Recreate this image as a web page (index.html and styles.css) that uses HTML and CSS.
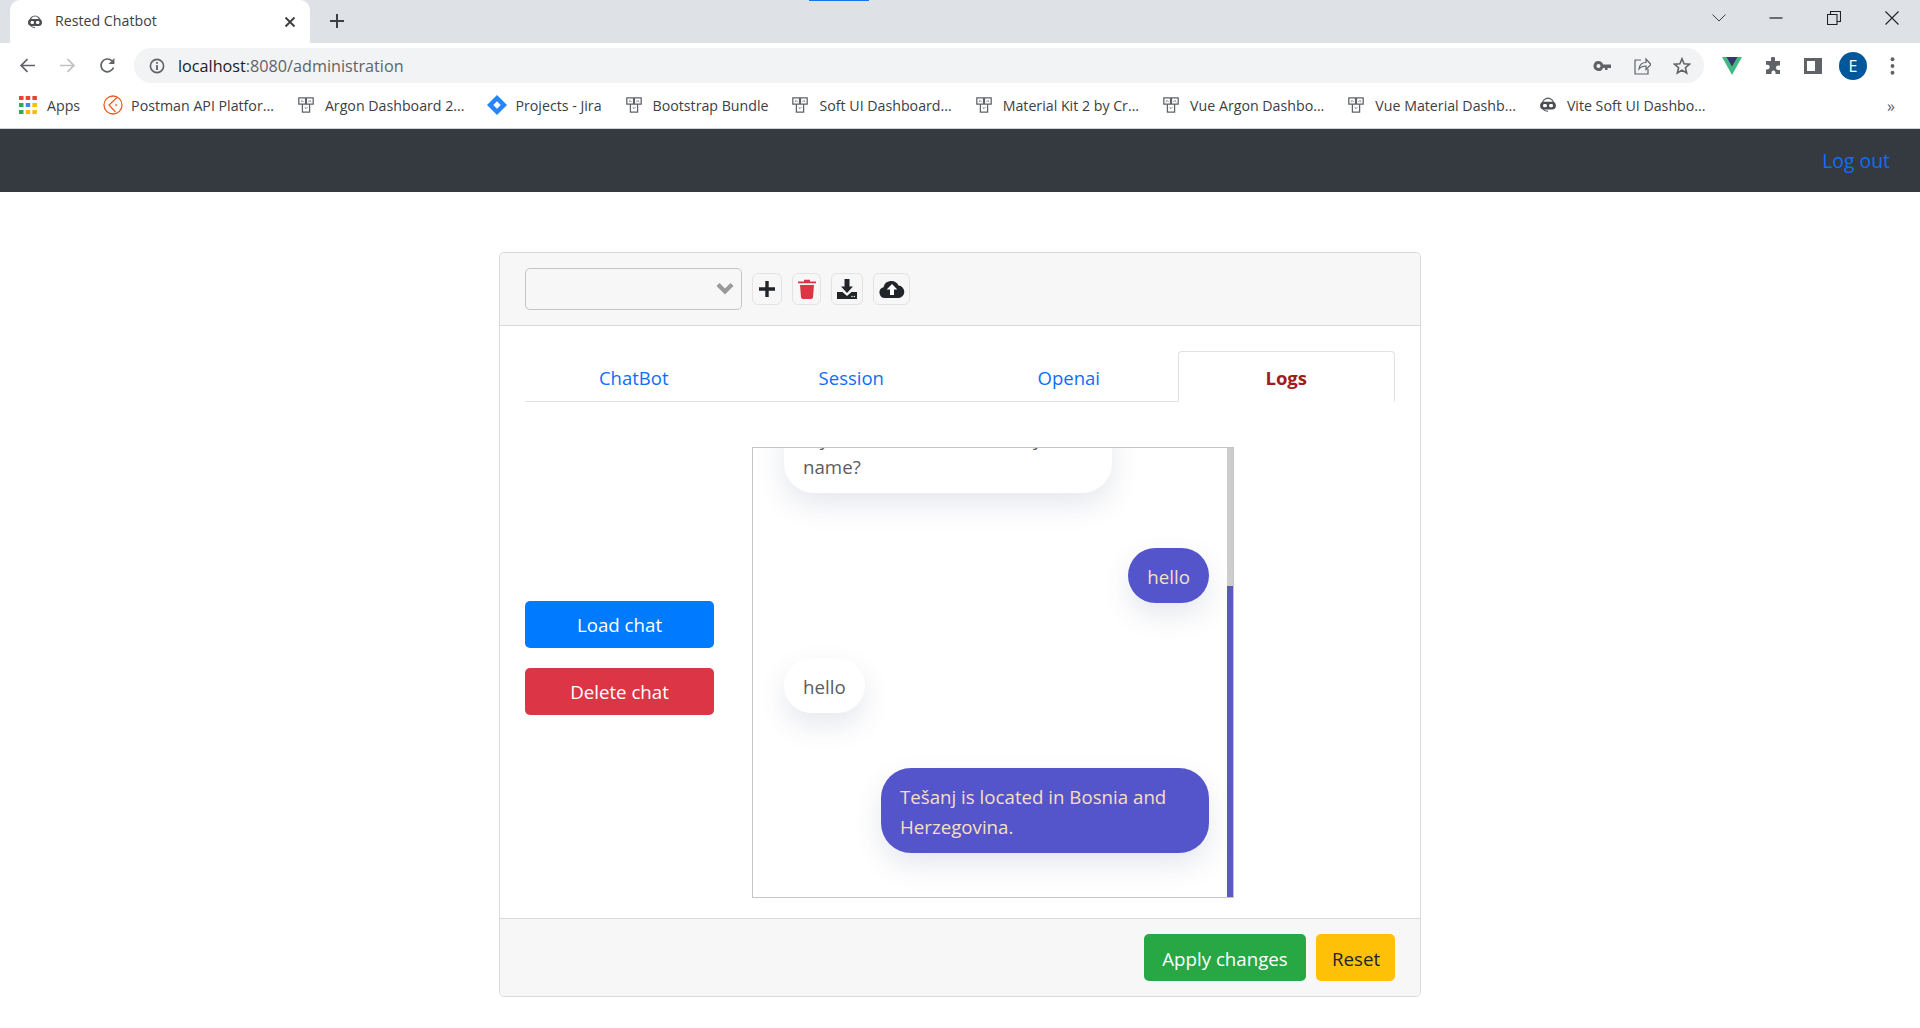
FILE: index.html
```html
<!DOCTYPE html>
<html lang="en">
<head>
  <meta charset="UTF-8">
  <title>Rested Chatbot</title>
  <link rel="stylesheet" href="styles.css">
</head>
<body>

  <svg class="defs" width="0" height="0">
    <symbol id="bot" viewBox="0 0 16 16">
      <path d="M3 7a5 5 0 0 1 10 0M3.500 11.500c1.200 1.500 2.800 2.200 4.500 2.200" fill="none" stroke="#5f6368" stroke-width="1.200"/>
      <rect x="1" y="5" width="14" height="7" rx="3.400" fill="#4a4d52"/>
      <rect x="3.600" y="7" width="3.400" height="3" rx="1.200" fill="#fff"/>
      <rect x="9" y="7" width="3.400" height="3" rx="1.200" fill="#fff"/>
    </symbol>
    <symbol id="vuestack" viewBox="-1 -1 20 20">
      <path d="M1 1h7.500v7H1zM9.500 1H17v7H9.500zM5 8h8v9H5z" fill="#fff" stroke="#5f6368" stroke-width="1.400"/>
      <path d="M3.200 5.500l1.500-1.500L6.200 5.500M11.800 5.500l1.500-1.500L14.800 5.500M7.500 11.500L9 13l1.500-1.500" fill="none" stroke="#5f6368" stroke-width="1"/>
    </symbol>
  </svg>

  <div class="browser">
    <div class="tabstrip">
      <div class="loadbar"></div>
      <div class="tab">
        <svg class="favicon"><use href="#bot"/></svg>
        <span class="tab-title">Rested Chatbot</span>
        <svg class="tab-close" viewBox="0 0 12 12"><path d="M1.500 1.500l9 9M10.500 1.500l-9 9" stroke="#3c4043" stroke-width="1.900"/></svg>
      </div>
      <svg class="tab-new" viewBox="0 0 16 16"><path d="M8 1v14M1 8h14" stroke="#3c4043" stroke-width="2"/></svg>
      <div class="spacer"></div>
      <svg class="win win-tabs" viewBox="0 0 14 8"><path d="M.5.500L7 7 13.500.500" fill="none" stroke="#3c4043"/></svg>
      <svg class="win win-min" viewBox="0 0 14 14"><path d="M.5 7h13" stroke="#202124" stroke-width="1.200"/></svg>
      <svg class="win win-max" viewBox="0 0 14 14"><path d="M.5 3.500h9.500v10H.5zM3.500 3.500V.5h10v10H10" fill="none" stroke="#202124" stroke-width="1.100"/></svg>
      <svg class="win win-close" viewBox="0 0 14 14"><path d="M.5.500l13 13M13.500.500l-13 13" stroke="#202124" stroke-width="1.100"/></svg>
    </div>

    <div class="toolbar">
      <svg class="nav-icon" viewBox="0 0 16 16"><path d="M15 8H2M8 2L2 8l6 6" fill="none" stroke="#5f6368" stroke-width="1.600"/></svg>
      <svg class="nav-icon nav-forward" viewBox="0 0 16 16"><path d="M1 8h13M8 2l6 6-6 6" fill="none" stroke="#bdc1c6" stroke-width="1.600"/></svg>
      <svg class="nav-icon nav-reload" viewBox="0 0 16 16"><path d="M13.600 9.800A6 6 0 1 1 12.300 3.800" fill="none" stroke="#5f6368" stroke-width="1.600"/><path d="M14.500 1v5.500H9z" fill="#5f6368"/></svg>
      <div class="omnibox">
        <svg class="info-icon" viewBox="0 0 16 16"><circle cx="8" cy="8" r="6.600" fill="none" stroke="#5f6368" stroke-width="1.600"/><path d="M7.100 7h1.800v5H7.100zM7.100 4h1.800v1.800H7.100z" fill="#5f6368"/></svg>
        <span class="url"><b>localhost</b>:8080/administration</span>
        <div class="spacer"></div>
        <svg class="omni-icon" viewBox="0 0 18 12"><path d="M5.500 1a5 5 0 1 0 4.600 7H12v2h2.500V8H18V4.500H10.100A5 5 0 0 0 5.500 1zm0 3a2 2 0 1 1 0 4 2 2 0 0 1 0-4z" fill="#5f6368" fill-rule="evenodd"/></svg>
        <svg class="omni-icon" viewBox="0 0 18 18"><path d="M8 3H2v14h13v-5M6 12c.500-4 3-6.500 7-6.500V2l5 5.500-5 5V9c-3 0-5 .5-7 3z" fill="none" stroke="#5f6368" stroke-width="1.200"/></svg>
        <svg class="omni-icon" viewBox="0 0 18 18"><path d="M9 1.800l2.100 5 5.400.4-4.100 3.500 1.300 5.300L9 13.100 4.300 16l1.300-5.300L1.500 7.200l5.400-.4z" fill="none" stroke="#5f6368" stroke-width="1.600"/></svg>
      </div>
      <svg class="ext-icon ext-vue" viewBox="0 0 20 18"><path d="M0 0h20L10 18z" fill="#42b883"/><path d="M4.500 0h11L10 9.500z" fill="#35356e"/></svg>
      <svg class="ext-icon" viewBox="0 0 18 18"><path d="M7 1.500a2 2 0 0 1 4 0V4h5v4.500h-1.800a2.200 2.200 0 0 0 0 4.400H16V17h-4.500v-1.500a2 2 0 0 0-4 0V17H2v-4.500h1.300a2.400 2.400 0 0 0 0-4.800H2V4h5z" fill="#5f6368"/></svg>
      <svg class="ext-icon" viewBox="0 0 18 18"><path d="M0 1h18v16H0zM3 4v10h8V4z" fill="#5f6368" fill-rule="evenodd"/></svg>
      <span class="avatar">E</span>
      <svg class="ext-icon ext-menu" viewBox="0 0 4 16"><circle cx="2" cy="2" r="1.700" fill="#5f6368"/><circle cx="2" cy="8" r="1.700" fill="#5f6368"/><circle cx="2" cy="14" r="1.700" fill="#5f6368"/></svg>
    </div>

    <div class="bookmarks">
      <span class="bookmark">
        <svg class="bm-icon" viewBox="0 0 18 18">
          <rect x="0" y="0" width="4.500" height="4" fill="#ea4335"/><rect x="6.700" y="0" width="4.500" height="4" fill="#ea4335"/><rect x="13.400" y="0" width="4.500" height="4" fill="#ea4335"/>
          <rect x="0" y="7" width="4.500" height="4" fill="#34a853"/><rect x="6.700" y="7" width="4.500" height="4" fill="#4285f4"/><rect x="13.400" y="7" width="4.500" height="4" fill="#fbbc04"/>
          <rect x="0" y="14" width="4.500" height="4" fill="#34a853"/><rect x="6.700" y="14" width="4.500" height="4" fill="#fbbc04"/><rect x="13.400" y="14" width="4.500" height="4" fill="#fbbc04"/>
        </svg>Apps</span>
      <span class="bookmark">
        <svg class="bm-icon bm-wide" viewBox="0 0 20 20"><circle cx="10" cy="10" r="9" fill="#fff" stroke="#ef5b25" stroke-width="1.300"/><path d="M14 2.500L6 10l6.500 7" fill="none" stroke="#ef5b25" stroke-width="1.300"/><path d="M12.500 8.500l2 1.500-2 1.500z" fill="#ef5b25"/></svg>Postman API Platfor...</span>
      <span class="bookmark"><svg class="bm-icon"><use href="#vuestack"/></svg>Argon Dashboard 2...</span>
      <span class="bookmark">
        <svg class="bm-icon bm-wide" viewBox="0 0 20 20"><path d="M10 0l10 10-10 10L0 10z" fill="#2684ff"/><path d="M10 6.300L13.700 10 10 13.700 6.300 10z" fill="#fff"/></svg>Projects - Jira</span>
      <span class="bookmark"><svg class="bm-icon"><use href="#vuestack"/></svg>Bootstrap Bundle</span>
      <span class="bookmark"><svg class="bm-icon"><use href="#vuestack"/></svg>Soft UI Dashboard...</span>
      <span class="bookmark"><svg class="bm-icon"><use href="#vuestack"/></svg>Material Kit 2 by Cr...</span>
      <span class="bookmark"><svg class="bm-icon"><use href="#vuestack"/></svg>Vue Argon Dashbo...</span>
      <span class="bookmark"><svg class="bm-icon"><use href="#vuestack"/></svg>Vue Material Dashb...</span>
      <span class="bookmark"><svg class="bm-icon"><use href="#bot"/></svg>Vite Soft UI Dashbo...</span>
      <div class="spacer"></div>
      <span class="bm-more">»</span>
    </div>
  </div>

  <nav class="navbar">
    <a class="logout">Log out</a>
  </nav>

  <main class="card">
    <div class="card-header">
      <div class="select-box">
        <svg class="select-arrow" viewBox="0 0 18 13"><path d="M2 2.500l7 7 7-7" fill="none" stroke="#999" stroke-width="4.200"/></svg>
      </div>
      <button class="icon-btn btn-add">
        <svg viewBox="0 0 18 18"><path d="M9 1v16M1 9h16" stroke="#212529" stroke-width="3.400"/></svg>
      </button>
      <button class="icon-btn btn-trash">
        <svg viewBox="0 0 18 20"><path d="M0 2.500h18v1.800H0zM6 .8h6v1.700H6zM2 6h14l-1 12.200q-.2 1.800-2 1.800H5q-1.800 0-2-1.800z" fill="#dc3545"/></svg>
      </button>
      <button class="icon-btn btn-down">
        <svg viewBox="0 0 20 20"><path d="M7.500 0h5v7.500h3.500L10 14 4 7.500h3.500zM0 13h5.500l4.500 4 4.500-4H20v7H0z" fill="#212529"/><circle cx="15" cy="17.500" r=".7" fill="#fff"/><circle cx="17.300" cy="17.500" r=".7" fill="#fff"/></svg>
      </button>
      <button class="icon-btn btn-up">
        <svg viewBox="0 0 26 18"><path d="M6 18a5.500 5.500 0 0 1-1.500-10.800A8 8 0 0 1 19.500 5.500 6.300 6.300 0 0 1 20 18z" fill="#212529"/><path d="M13 4l5.300 5.600H15V15h-4V9.600H7.700z" fill="#fff"/></svg>
      </button>
    </div>

    <div class="card-body">
      <div class="tabs">
        <a class="tab-link">ChatBot</a>
        <a class="tab-link">Session</a>
        <a class="tab-link">Openai</a>
        <a class="tab-link active">Logs</a>
      </div>

      <div class="logs">
        <div class="chat-actions">
          <button class="btn btn-blue">Load chat</button>
          <button class="btn btn-red">Delete chat</button>
        </div>

        <div class="chat-box">
          <div class="messages">
            <div class="bubble bot first">My dearest friend, what is your name?</div>
            <div class="bubble user">hello</div>
            <div class="bubble bot">hello</div>
            <div class="bubble user wide">Tešanj is located in Bosnia and Herzegovina.</div>
          </div>
          <div class="scrollbar"><div class="scroll-thumb"></div></div>
        </div>
      </div>
    </div>

    <div class="card-footer">
      <button class="btn btn-green">Apply changes</button>
      <button class="btn btn-yellow">Reset</button>
    </div>
  </main>

</body>
</html>
```

FILE: styles.css
```css
* {
  box-sizing: border-box;
}

body {
  margin: 0;
  height: 1028px;
  overflow: hidden;
  font-family: "Open Sans", "Noto Sans", Arial, sans-serif;
  background-color: #fff;
  color: #212529;
}

.defs {
  position: absolute;
}

.spacer {
  flex: 1;
}

/* browser chrome */

.browser {
  border-bottom: 1px solid #d0d2d5;
  font-family: "Open Sans", Arial, sans-serif;
}

.tabstrip {
  position: relative;
  display: flex;
  align-items: center;
  height: 43px;
  background-color: #dee1e6;
  padding-left: 10px;
}

.loadbar {
  position: absolute;
  left: 809px;
  top: 0;
  width: 60px;
  height: 1px;
  background-color: #1a73e8;
}

.tab {
  display: flex;
  align-items: center;
  align-self: flex-end;
  width: 300px;
  height: 43px;
  padding: 0 14px 0 17px;
  background-color: #fff;
  border-radius: 10px 10px 0 0;
}

.favicon {
  width: 16px;
  height: 16px;
  margin-right: 12px;
}

.tab-title {
  flex: 1;
  margin-bottom: 2px;
  font-size: 14.200px;
  color: #3c4043;
}

.tab-close {
  width: 12px;
  height: 12px;
}

.tab-new {
  width: 16px;
  height: 16px;
  margin: 0 0 2px 19px;
}

.win {
  width: 14px;
  height: 14px;
  margin: 0 44px 7px 0;
}

.win-tabs {
  height: 8px;
  margin-right: 43px;
}

.win-close {
  margin-right: 21px;
}

.toolbar {
  display: flex;
  align-items: center;
  height: 40px;
  padding: 5px 0 0 19px;
  background-color: #fff;
}

.nav-icon {
  width: 17px;
  height: 17px;
  margin-right: 23px;
}

.nav-reload {
  margin-right: 18px;
}

.omnibox {
  display: flex;
  align-items: center;
  width: 1570px;
  height: 35px;
  padding: 0 13px 0 15px;
  background-color: #f1f3f4;
  border-radius: 18px;
}

.info-icon {
  width: 16px;
  height: 16px;
  margin-right: 13px;
}

.url {
  font-size: 16.200px;
  color: #5f6368;
}

.url b {
  font-weight: 400;
  color: #202124;
}

.omni-icon {
  width: 18px;
  height: 18px;
  margin-left: 22px;
}

.ext-icon {
  width: 18px;
  height: 18px;
  margin-left: 22px;
}

.ext-vue {
  width: 20px;
  margin-left: 18px;
}

.avatar {
  display: flex;
  align-items: center;
  justify-content: center;
  width: 28px;
  height: 28px;
  margin-left: 17px;
  border-radius: 50%;
  background-color: #01579b;
  color: #fff;
  font-size: 16px;
}

.ext-menu {
  width: 5px;
  margin-left: 23px;
}

.bookmarks {
  display: flex;
  align-items: center;
  height: 45px;
  padding: 0 25px 0 19px;
  background-color: #fff;
}

.bookmark {
  display: flex;
  align-items: center;
  margin-right: 23px;
  padding-bottom: 1px;
  font-size: 14.200px;
  color: #3c4043;
}

.bm-icon {
  width: 18px;
  height: 18px;
  margin-right: 10px;
}

.bm-wide {
  width: 20px;
  height: 20px;
  margin-right: 8px;
}

.bm-more {
  font-size: 16px;
  color: #5f6368;
}

/* app */

.navbar {
  display: flex;
  align-items: center;
  justify-content: flex-end;
  height: 63px;
  padding-right: 30px;
  background-color: #343a40;
}

.logout {
  font-size: 19.400px;
  color: #0d6efd;
}

.card {
  width: 922px;
  margin: 60px auto 0;
  border: 1px solid #d9d9d9;
  border-radius: 5px;
  background-color: #fff;
}

.card-header {
  display: flex;
  align-items: center;
  height: 73px;
  padding: 0 25px;
  background-color: #f7f7f7;
  border-bottom: 1px solid #d9d9d9;
  border-radius: 5px 5px 0 0;
}

.select-box {
  position: relative;
  width: 217px;
  height: 42px;
  margin-right: 10px;
  border: 1px solid #c4c4c4;
  border-radius: 5px;
}

.select-arrow {
  position: absolute;
  right: 7px;
  top: 13px;
  width: 18px;
  height: 13px;
}

.icon-btn {
  display: flex;
  align-items: center;
  justify-content: center;
  height: 32px;
  margin-right: 10px;
  padding: 0;
  background-color: #f7f7f7;
  border: 1px solid #e3e3e3;
  border-radius: 6px;
}

.btn-add {
  width: 30px;
}

.btn-add svg {
  width: 18px;
  height: 18px;
}

.btn-trash {
  width: 29px;
}

.btn-trash svg {
  width: 18px;
  height: 20px;
}

.btn-down {
  width: 32px;
}

.btn-down svg {
  width: 20px;
  height: 20px;
}

.btn-up {
  width: 37px;
}

.btn-up svg {
  width: 26px;
  height: 18px;
}

.card-body {
  height: 592px;
  padding: 25px 25px 0;
}

.tabs {
  display: grid;
  grid-template-columns: repeat(4, 1fr);
  height: 51px;
  border-bottom: 1px solid #dee2e6;
}

.tab-link {
  display: flex;
  align-items: center;
  justify-content: center;
  height: 51px;
  padding-top: 2px;
  font-size: 18.500px;
  color: #0d6efd;
  border: 1px solid transparent;
  border-radius: 4px 4px 0 0;
}

.tab-link.active {
  font-weight: 700;
  color: #a01c1c;
  background-color: #fff;
  border-color: #dee2e6 #dee2e6 #fff;
}

.logs {
  display: flex;
  align-items: center;
  margin-top: 45px;
}

.chat-actions {
  display: flex;
  flex-direction: column;
  gap: 20px;
  width: 189px;
  margin: 0 38px 30px 0;
}

.btn {
  height: 47px;
  padding: 1px 16px 0;
  font-family: inherit;
  font-size: 18.700px;
  border: none;
  border-radius: 5px;
}

.btn-blue {
  background-color: #007bff;
  color: #fff;
}

.btn-red {
  background-color: #dc3545;
  color: #fff;
}

.chat-box {
  display: flex;
  width: 482px;
  height: 451px;
  border: 1px solid #c4c4c4;
}

.messages {
  flex: 1;
  display: flex;
  flex-direction: column;
  justify-content: flex-end;
  overflow: hidden;
  padding: 0 18px 44px 31px;
  font-size: 18.700px;
  line-height: 30px;
}

.bubble {
  flex-shrink: 0;
  padding: 14px 19px 11px;
  border-radius: 30px;
  box-shadow: 0 12px 28px rgba(60, 80, 120, 0.13);
}

.bot {
  align-self: flex-start;
  margin-bottom: 55px;
  background-color: #fff;
  color: #5c5c5c;
}

.first {
  width: 328px;
  padding-bottom: 12px;
  line-height: 28px;
}

.user {
  align-self: flex-end;
  background-color: #5555cb;
  color: #f7dfc0;
  margin-bottom: 55px;
}

.wide {
  width: 328px;
  margin-bottom: 0;
}

.scrollbar {
  display: flex;
  flex-direction: column;
  justify-content: flex-end;
  width: 6px;
  background-color: #cdcdcd;
}

.scroll-thumb {
  height: 311px;
  background-color: #5a5abf;
}

.card-footer {
  display: flex;
  align-items: center;
  justify-content: flex-end;
  gap: 10px;
  height: 78px;
  padding: 0 25px;
  background-color: #f7f7f7;
  border-top: 1px solid #d9d9d9;
  border-radius: 0 0 5px 5px;
}

.btn-green {
  width: 162px;
  background-color: #28a745;
  color: #fff;
}

.btn-yellow {
  width: 79px;
  background-color: #ffc107;
  color: #212529;
}
```
